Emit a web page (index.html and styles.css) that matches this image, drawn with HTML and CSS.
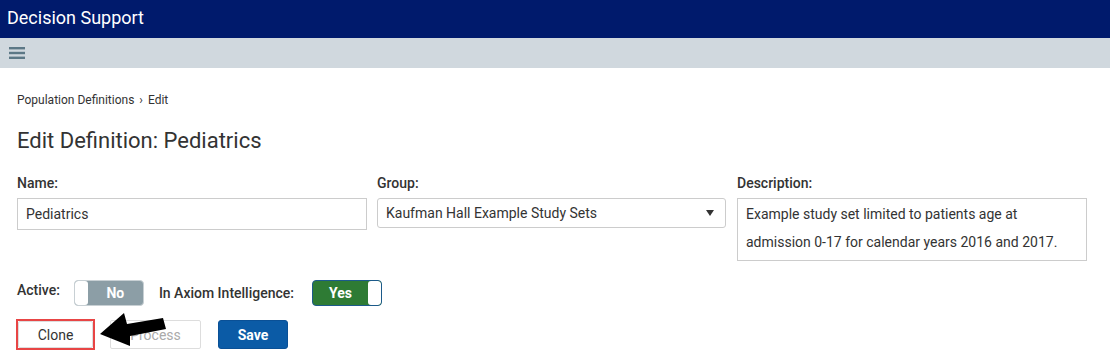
FILE: index.html
```html
<!DOCTYPE html>
<html>
<head>
<meta charset="utf-8">
<link rel="stylesheet" href="styles.css">
</head>
<body>
<header class="app-header">Decision Support</header>
<div class="toolbar">
  <svg class="menu-icon" width="16" height="14" viewBox="0 0 16 14"><rect x="0" y="1" width="16" height="2.4" fill="#5c7886"/><rect x="0" y="5.8" width="16" height="2.4" fill="#5c7886"/><rect x="0" y="10.6" width="16" height="2.4" fill="#5c7886"/></svg>
</div>
<main class="content">
  <nav class="breadcrumb">Population Definitions <span class="sep">›</span> Edit</nav>
  <h1 class="page-title">Edit Definition: Pediatrics</h1>
  <div class="fields">
    <div class="field">
      <label class="field-label">Name:</label>
      <div class="input">Pediatrics</div>
    </div>
    <div class="field">
      <label class="field-label">Group:</label>
      <div class="select"><span>Kaufman Hall Example Study Sets</span><span class="caret"></span></div>
    </div>
    <div class="field">
      <label class="field-label">Description:</label>
      <div class="textarea">Example study set limited to patients age at admission 0-17 for calendar years 2016 and 2017.</div>
    </div>
  </div>
  <div class="toggles">
    <span class="toggle-label">Active:</span>
    <div class="toggle off"><span class="knob"></span><span class="toggle-text">No</span></div>
    <span class="toggle-label second">In Axiom Intelligence:</span>
    <div class="toggle on"><span class="toggle-text">Yes</span><span class="knob"></span></div>
  </div>
  <div class="actions">
    <div class="highlight"><button class="btn btn-default">Clone</button></div>
    <button class="btn btn-disabled">Process</button>
    <button class="btn btn-primary">Save</button>
    <svg class="pointer-arrow" width="80" height="45" viewBox="0 0 80 45"><polygon points="5,28 29,7 32,18 68,12 71,23 35,30 35,40" fill="#000"/></svg>
  </div>
</main>
</body>
</html>
```
FILE: styles.css
```css
* { box-sizing: border-box; }
html, body { margin: 0; padding: 0; background: #fff; }
body { font-family: Roboto, "Liberation Sans", Arial, sans-serif; color: #333; width: 1110px; height: 356px; overflow: hidden; }

.app-header {
  height: 38px;
  background: #001a6c;
  color: #fff;
  font-size: 18px;
  line-height: 36px;
  padding-left: 7px;
}
.toolbar {
  height: 30px;
  background: #d0d8de;
  display: flex;
  align-items: center;
  padding-left: 9px;
}
.menu-icon { display: block; }

.content { padding: 24px 17px 0; position: relative; }
.breadcrumb { font-size: 12px; line-height: 16px; color: #333; }
.breadcrumb .sep { margin: 0 2px; }
.page-title { font-size: 22px; font-weight: 400; margin: 20px 0 0; line-height: 26px; color: #333; }

.fields { display: grid; grid-template-columns: 350px 350px 350px; column-gap: 10px; margin-top: 21px; }
.field-label { display: block; font-size: 14px; font-weight: 500; line-height: 16px; color: #333; margin-bottom: 7px; }
.input {
  height: 32px; border: 1px solid #ccc; padding: 0 8px;
  font-size: 14px; line-height: 30px; color: #333;
}
.select {
  width: 349px; height: 30px; border: 1px solid #ccc; border-radius: 3px; padding: 0 11px 0 8px;
  font-size: 14px; line-height: 28px; display: flex; justify-content: space-between; align-items: center;
}
.caret { width: 0; height: 0; border-left: 4px solid transparent; border-right: 4px solid transparent; border-top: 6px solid #333; }
.textarea {
  width: 350px; height: 63px; border: 1px solid #ccc; padding: 1px 8px;
  font-size: 14px; line-height: 28px; color: #333;
}

.toggles { display: flex; align-items: flex-start; margin-top: 19px; }
.toggle-label { font-size: 14px; font-weight: 500; line-height: 16px; margin-top: 2px; }
.toggle-label.second { margin-left: 15px; margin-top: 5px; }
.toggle {
  width: 70px; height: 26px; border-radius: 4px; display: flex; overflow: hidden;
  font-size: 14px; font-weight: 700; color: #fff;
}
.toggle.off { background: #8c9ea6; border: 1px solid #c8d0d4; margin-left: 14px; }
.toggle.on { background: #2e7b34; border: 1px solid #1c5a8a; margin-left: 18px; }
.knob { width: 13px; background: #fff; border-radius: 3px; }
.toggle-text { flex: 1; text-align: center; line-height: 24px; }

.actions { display: flex; align-items: center; margin-top: 13px; position: relative; margin-left: -1px; }
.highlight { border: 2px solid #e84545; }
.btn {
  font-family: Roboto, "Liberation Sans", Arial, sans-serif;
  height: 29px; border-radius: 2px; font-size: 14px; padding: 0; cursor: pointer;
}
.btn-default { width: 75px; background: #fff; border: 1px solid #ddd; color: #333; height: 27px; }
.btn-disabled { width: 91px; margin-left: 15px; background: #fff; border: 1px solid #ddd; color: #aaa; }
.btn-primary { width: 70px; margin-left: 17px; background: #0b5ba6; border: 1px solid #0a5096; color: #fff; font-weight: 700; border-radius: 3px; }
.pointer-arrow { position: absolute; left: 79px; top: -13px; }
```
